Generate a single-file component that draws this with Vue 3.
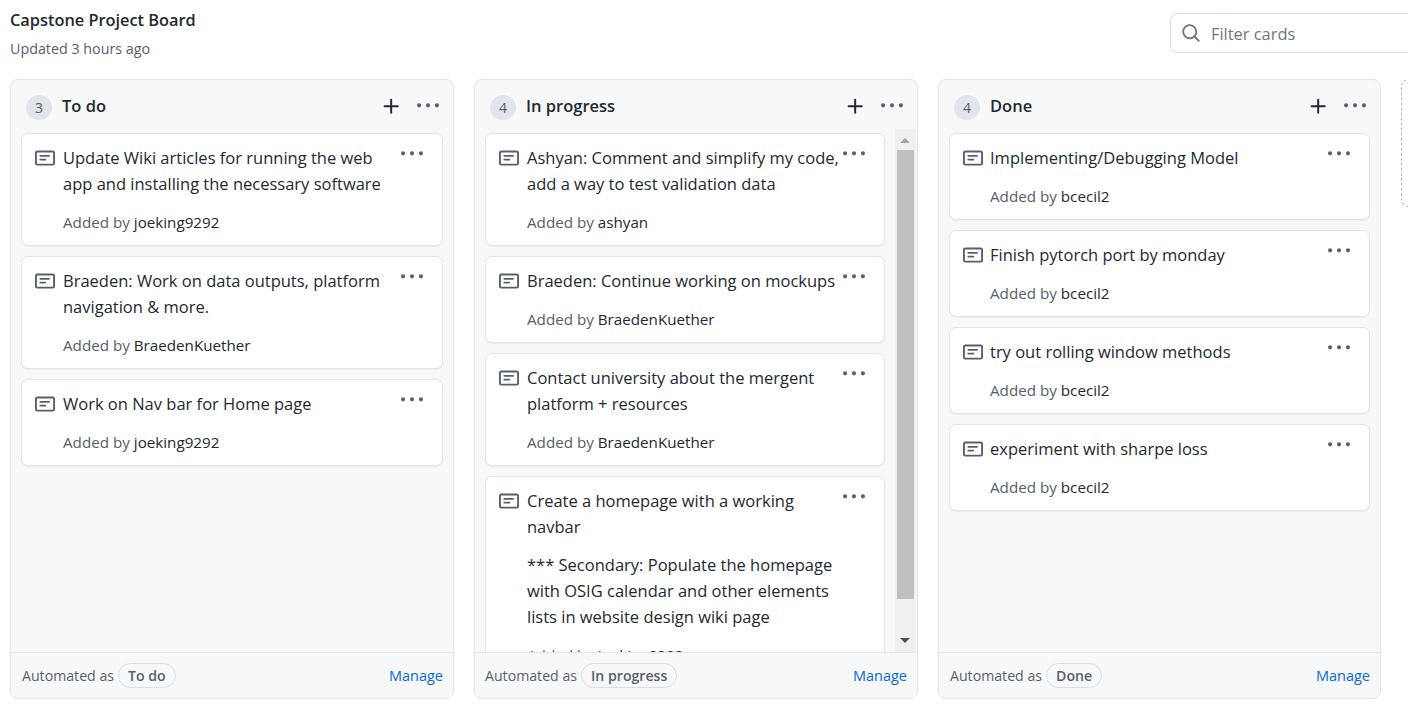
<script setup>
const note = 'M0 3.75C0 2.784.784 2 1.75 2h12.5c.966 0 1.75.784 1.75 1.75v8.5A1.75 1.75 0 0 1 14.25 14H1.75A1.75 1.75 0 0 1 0 12.25Zm1.75-.25a.25.25 0 0 0-.25.25v8.5c0 .138.112.25.25.25h12.5a.25.25 0 0 0 .25-.25v-8.5a.25.25 0 0 0-.25-.25ZM3.5 6.25a.75.75 0 0 1 .75-.75h7a.75.75 0 0 1 0 1.5h-7a.75.75 0 0 1-.75-.75Zm.75 2.25h4a.75.75 0 0 1 0 1.5h-4a.75.75 0 0 1 0-1.5Z'
const kebab = 'M8 9a1.5 1.5 0 1 0 0-3 1.5 1.5 0 0 0 0 3ZM1.5 9a1.5 1.5 0 1 0 0-3 1.5 1.5 0 0 0 0 3Zm13 0a1.5 1.5 0 1 0 0-3 1.5 1.5 0 0 0 0 3Z'
const plus = 'M7.75 2a.75.75 0 0 1 .75.75V7h4.25a.75.75 0 0 1 0 1.5H8.5v4.25a.75.75 0 0 1-1.5 0V8.5H2.75a.75.75 0 0 1 0-1.5H7V2.75A.75.75 0 0 1 7.75 2Z'
const search = 'M10.68 11.74a6 6 0 0 1-7.922-8.982 6 6 0 0 1 8.982 7.922l3.04 3.04a.749.749 0 0 1-.326 1.275.749.749 0 0 1-.734-.215ZM11.5 7a4.499 4.499 0 1 0-8.997 0A4.499 4.499 0 0 0 11.5 7Z'

const columns = [
  { name: 'To do', count: 3, scroll: false, cards: [
    { paras: [['Update Wiki articles for running the web', 'app and installing the necessary software']], by: 'joeking9292' },
    { paras: [['Braeden: Work on data outputs, platform', 'navigation & more.']], by: 'BraedenKuether' },
    { paras: [['Work on Nav bar for Home page']], by: 'joeking9292' },
  ] },
  { name: 'In progress', count: 4, scroll: true, cards: [
    { paras: [['Ashyan: Comment and simplify my code,', 'add a way to test validation data']], by: 'ashyan' },
    { paras: [['Braeden: Continue working on mockups']], by: 'BraedenKuether' },
    { paras: [['Contact university about the mergent', 'platform + resources']], by: 'BraedenKuether' },
    { paras: [['Create a homepage with a working', 'navbar'], ['*** Secondary: Populate the homepage', 'with OSIG calendar and other elements', 'lists in website design wiki page']], by: 'joeking9292' },
  ] },
  { name: 'Done', count: 4, scroll: false, cards: [
    { paras: [['Implementing/Debugging Model']], by: 'bcecil2' },
    { paras: [['Finish pytorch port by monday']], by: 'bcecil2' },
    { paras: [['try out rolling window methods']], by: 'bcecil2' },
    { paras: [['experiment with sharpe loss']], by: 'bcecil2' },
  ] },
]
</script>

<template>
  <div class="page">
    <header class="top">
      <div class="heading">
        <h1>Capstone Project Board</h1>
        <p>Updated 3 hours ago</p>
      </div>
      <label class="filter">
        <svg class="filter-icon" viewBox="0 0 16 16" width="20" height="20"><path :d="search" /></svg>
        <input type="text" placeholder="Filter cards" />
      </label>
    </header>
    <main class="board">
      <section v-for="col in columns" :key="col.name" class="column">
        <div class="col-head">
          <span class="count">{{ col.count }}</span>
          <h2>{{ col.name }}</h2>
          <svg class="plus" viewBox="0 0 16 16" width="21" height="21"><path :d="plus" /></svg>
          <svg class="more" viewBox="0 0 16 16" width="22" height="22"><path :d="kebab" /></svg>
        </div>
        <div class="col-body">
          <div class="cards">
            <article v-for="(card, i) in col.cards" :key="i" class="card">
              <svg class="note" viewBox="0 0 16 16" width="20" height="20"><path :d="note" /></svg>
              <div class="card-main">
                <p v-for="(para, j) in card.paras" :key="j" class="para">
                  <span v-for="line in para" :key="line" class="line">{{ line }}</span>
                </p>
                <p class="meta">Added by <span class="author">{{ card.by }}</span></p>
              </div>
              <svg class="card-more" viewBox="0 0 16 16" width="22" height="22"><path :d="kebab" /></svg>
            </article>
          </div>
          <div v-if="col.scroll" class="scrollbar">
            <span class="arrow up"></span>
            <span class="thumb"></span>
            <span class="arrow down"></span>
          </div>
        </div>
        <div class="col-foot">
          <span class="auto">Automated as</span>
          <span class="pill">{{ col.name }}</span>
          <a class="manage">Manage</a>
        </div>
      </section>
      <div class="add-column"></div>
    </main>
  </div>
</template>

<style>
html, body { margin: 0; overflow: hidden; background: #fff; }
</style>

<style scoped>
.page {
  width: 1408px;
  height: 712px;
  overflow: hidden;
  font-family: "Open Sans", "Noto Sans", sans-serif;
  color: #24292f;
}
.top {
  height: 79px;
  display: flex;
  justify-content: space-between;
  padding-left: 10px;
  box-sizing: border-box;
}
.heading h1 {
  margin: 8px 0 0;
  font-size: 16.35px;
  line-height: 24px;
  font-weight: 600;
}
.heading p {
  margin: 6px 0 0;
  font-size: 14.3px;
  line-height: 22px;
  color: #57606a;
}
.filter {
  flex: none;
  width: 300px;
  height: 40px;
  margin-top: 13px;
  margin-right: -62px;
  box-sizing: border-box;
  border: 1px solid #d8dee4;
  border-radius: 7px;
  display: flex;
  align-items: center;
  padding-left: 10px;
  gap: 10px;
}
.filter-icon { fill: #6e7781; flex: none; }
.filter input {
  border: 0;
  outline: 0;
  padding: 0;
  flex: 1;
  min-width: 0;
  font: 400 16.4px "Open Sans", sans-serif;
  color: #24292f;
  background: transparent;
}
.filter input::placeholder { color: #6e7781; opacity: 1; }
.board {
  display: flex;
  gap: 20px;
  padding-left: 10px;
  height: 620px;
}
.column {
  flex: none;
  width: 444px;
  height: 620px;
  box-sizing: border-box;
  background: #f6f8fa;
  border: 1px solid #e1e4e8;
  border-radius: 8px;
  display: flex;
  flex-direction: column;
  overflow: hidden;
}
.column:last-of-type { width: 443px; }
.col-head {
  flex: none;
  height: 49px;
  display: flex;
  align-items: center;
  padding: 4px 3px 0 15px;
  box-sizing: border-box;
}
.count {
  width: 26px;
  height: 25px;
  border-radius: 50%;
  background: #e1e4e8;
  color: #57606a;
  font-size: 14px;
  display: flex;
  align-items: center;
  justify-content: center;
  margin-top: 1px;
}
h2 {
  margin: -2px 0 0 10px;
  flex: 1;
  font-size: 16.5px;
  font-weight: 600;
}
.plus { fill: #24292f; margin-top: -1px; }
.more { fill: #57606a; margin: -1px 11px 0 15px; }
.col-body {
  flex: 1;
  min-height: 0;
  display: flex;
  overflow: hidden;
}
.cards {
  flex: 1;
  min-width: 0;
  padding: 4px 10px 0;
  display: flex;
  flex-direction: column;
  gap: 10px;
}
.card {
  position: relative;
  flex: none;
  box-sizing: border-box;
  background: #fff;
  border: 1px solid #e1e4e8;
  border-radius: 7px;
  box-shadow: 0 1px 1px rgba(27, 31, 36, 0.05);
  padding: 11px 14px 12px 13px;
  display: flex;
  gap: 8px;
}
.column:last-of-type .card { gap: 7px; }
.note { fill: #57606a; flex: none; margin-top: 3px; }
.card-main { min-width: 0; }
.para { margin: 0 0 12px; font-size: 16.5px; line-height: 26px; }
.line { display: block; white-space: nowrap; }
.meta {
  margin: 14px 0 0;
  font-size: 15.2px;
  line-height: 22px;
  color: #57606a;
}
.para:has(+ .meta) { margin-bottom: 0; }
.author { color: #24292f; }
.card-more {
  position: absolute;
  top: 9px;
  right: 19px;
  fill: #57606a;
}
.scrollbar {
  flex: none;
  width: 21px;
  margin-right: 1px;
  background: #f0f0f0;
  position: relative;
}
.thumb {
  position: absolute;
  top: 21px;
  left: 2px;
  width: 17px;
  height: 449px;
  background: #c0c0c0;
}
.arrow {
  position: absolute;
  left: 5px;
  width: 0;
  height: 0;
  border-left: 5px solid transparent;
  border-right: 5px solid transparent;
}
.arrow.up { top: 9px; border-bottom: 5px solid #a3a3a3; }
.arrow.down { bottom: 9px; border-top: 5px solid #505050; }
.col-foot {
  flex: none;
  height: 46px;
  box-sizing: border-box;
  border-top: 1px solid #e1e4e8;
  background: #f6f8fa;
  display: flex;
  align-items: center;
  padding: 0 10px 0 11px;
  font-size: 14.15px;
}
.column:nth-of-type(2) .col-foot { padding-left: 10px; }
.auto { color: #57606a; }
.pill {
  margin-left: 4px;
  height: 25px;
  box-sizing: border-box;
  padding: 0 9px;
  border: 1px solid #d8dee4;
  border-radius: 13px;
  display: flex;
  align-items: center;
  font-weight: 600;
  color: #57606a;
}
.manage { margin-left: auto; color: #0969da; font-size: 14.5px; }
.add-column {
  flex: none;
  width: 60px;
  height: 128px;
  box-sizing: border-box;
  border: 1px dashed #afb8c1;
  border-radius: 8px;
}
</style>
